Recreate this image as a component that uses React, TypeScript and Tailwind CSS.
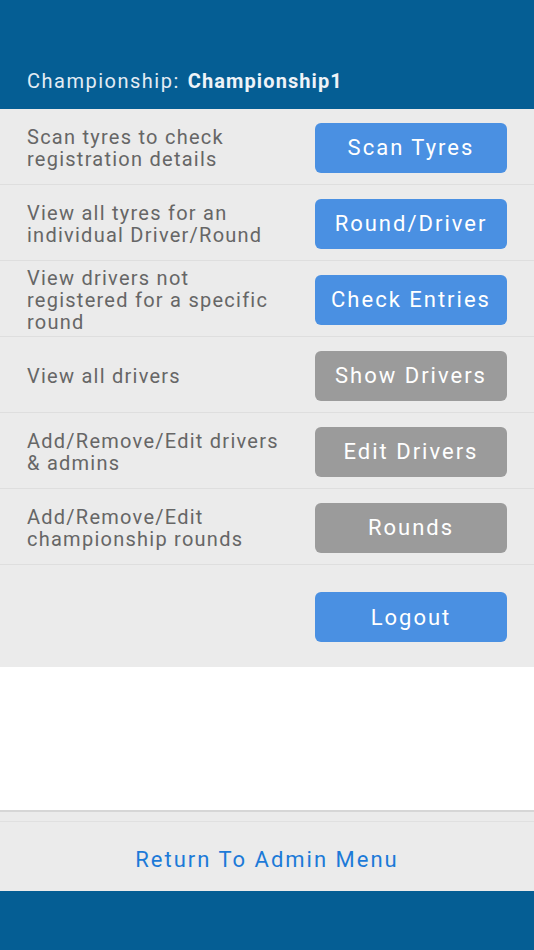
const rows: { text: string; label: string; tone: "blue" | "gray" }[] = [
  { text: "Scan tyres to check registration details", label: "Scan Tyres", tone: "blue" },
  { text: "View all tyres for an individual Driver/Round", label: "Round/Driver", tone: "blue" },
  { text: "View drivers not registered for a specific round", label: "Check Entries", tone: "blue" },
  { text: "View all drivers", label: "Show Drivers", tone: "gray" },
  { text: "Add/Remove/Edit drivers & admins", label: "Edit Drivers", tone: "gray" },
  { text: "Add/Remove/Edit championship rounds", label: "Rounds", tone: "gray" },
];

export default function App() {
  return (
    <div className="flex h-[950px] w-[534px] flex-col bg-white font-['Roboto',sans-serif]">
      {/* Header */}
      <div className="flex h-[109px] items-end bg-[#055e94] px-[27px] pb-[16px] leading-[24px]">
        <span className="text-[20px] tracking-[1.5px] text-[#e3ecf4]">Championship:</span>
        <span className="ml-[8px] text-[20px] font-bold tracking-[1.1px] text-[#eef3f8]">Championship1</span>
      </div>

      {/* Menu rows */}
      <div className="flex flex-col bg-[#ebebeb]">
        {rows.map((row) => (
          <div
            key={row.label}
            className="flex h-[76px] items-center justify-between border-b border-[#dedede] pl-[27px] pr-[27px] pt-[2px]"
          >
            <p className="w-[270px] text-[20px] leading-[22px] tracking-[1.25px] text-[#666666]">{row.text}</p>
            <button
              className={
                row.tone === "blue"
                  ? "h-[50px] w-[192px] rounded-[6px] bg-[#4a90e2] text-[22px] tracking-[2px] text-white"
                  : "h-[50px] w-[192px] rounded-[6px] bg-[#9b9b9b] text-[22px] tracking-[2px] text-white"
              }
            >
              {row.label}
            </button>
          </div>
        ))}
        <div className="flex h-[102px] items-start justify-end pr-[27px] pt-[27px]">
          <button className="h-[50px] w-[192px] rounded-[6px] bg-[#4a90e2] text-[22px] tracking-[2px] text-white">
            Logout
          </button>
        </div>
      </div>

      <div className="flex-1" />

      {/* Footer */}
      <div className="flex h-[81px] flex-col border-t-2 border-[#d6d6d6] bg-[#ebebeb]">
        <div className="h-[10px] border-b border-[#e0e0e0]" />
        <div className="flex flex-1 items-center justify-center pt-[6px]">
          <span className="text-[22px] tracking-[2px] text-[#1c7ad8]">Return To Admin Menu</span>
        </div>
      </div>
      <div className="h-[59px] bg-[#055e94]" />
    </div>
  );
}
